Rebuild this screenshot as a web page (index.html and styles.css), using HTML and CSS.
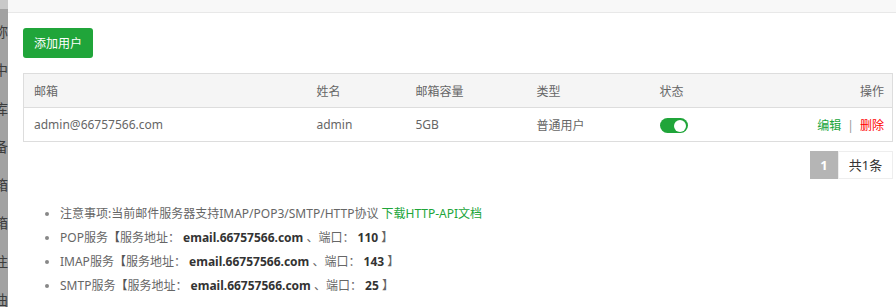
FILE: index.html
```html
<!DOCTYPE html>
<html lang="zh-CN">
<head>
<meta charset="utf-8">
<title>邮箱用户</title>
<link rel="stylesheet" href="styles.css">
</head>
<body>
<div class="page">
  <aside class="backdrop">
    <div class="backdrop-top"></div>
    <ul class="backdrop-list">
      <li>名称</li>
      <li>域中</li>
      <li>数据库</li>
      <li>备</li>
      <li>邮箱</li>
      <li>邮箱</li>
      <li>发送注</li>
      <li>邮曲</li>
    </ul>
  </aside>
  <section class="modal">
    <header class="modal-head"></header>
    <div class="modal-body">
      <button class="btn-add" type="button">添加用户</button>
      <table class="grid">
        <colgroup>
          <col class="c-mail"><col class="c-name"><col class="c-cap"><col class="c-type"><col class="c-state"><col>
        </colgroup>
        <thead>
          <tr><th>邮箱</th><th>姓名</th><th>邮箱容量</th><th>类型</th><th>状态</th><th class="right">操作</th></tr>
        </thead>
        <tbody>
          <tr>
            <td>admin@66757566.com</td>
            <td>admin</td>
            <td>5GB</td>
            <td>普通用户</td>
            <td><span class="toggle"><span class="knob"></span></span></td>
            <td class="right"><a class="edit">编辑</a><span class="sep">|</span><a class="del">删除</a></td>
          </tr>
        </tbody>
      </table>
      <div class="pager">
        <span class="page-cur">1</span><span class="page-total">共1条</span>
      </div>
      <ul class="notes">
        <li>注意事项:当前邮件服务器支持IMAP/POP3/SMTP/HTTP协议 <a class="link">下载HTTP-API文档</a></li>
        <li>POP服务<span class="br">【</span>服务地址： <b>email.66757566.com</b> 、端口： <b>110</b> 】</li>
        <li>IMAP服务<span class="br">【</span>服务地址： <b>email.66757566.com</b> 、端口： <b>143</b> 】</li>
        <li>SMTP服务<span class="br">【</span>服务地址： <b>email.66757566.com</b> 、端口： <b>25</b> 】</li>
      </ul>
    </div>
  </section>
</div>
</body>
</html>
```

FILE: styles.css
```css
* { box-sizing: border-box; }
html, body { margin: 0; padding: 0; }
body {
  width: 896px;
  height: 307px;
  overflow: hidden;
  background: #fff;
  font-family: "Noto Sans", "Noto Sans CJK SC", sans-serif;
  font-size: 12px;
  color: #666;
}
.page { display: flex; height: 307px; }
.backdrop {
  width: 8px;
  flex: none;
  background: #a2a2a2;
  overflow: hidden;
  display: flex;
  flex-direction: column;
}
.backdrop-top { height: 9px; background: #c9c9c9; flex: none; }
.backdrop-list {
  list-style: none;
  margin: 0;
  padding: 4px 0 0 0;
  width: 8px;
  direction: rtl;
  color: #3c3c3c;
  font-size: 14px;
  line-height: 38.3px;
  white-space: nowrap;
}
.backdrop-list li { text-align: right; }
.modal { flex: 1; display: flex; flex-direction: column; min-width: 0; }
.modal-head {
  height: 13px;
  background: #f8f8f8;
  border-bottom: 1px solid #e8e8e8;
}
.modal-body { padding: 15px 3px 0 15px; }
.btn-add {
  display: block;
  height: 30px;
  padding: 0 11px;
  border: 0;
  border-radius: 3px;
  background: #20a53a;
  color: #fff;
  font-family: inherit;
  font-size: 12px;
  cursor: pointer;
}
.grid {
  margin-top: 15px;
  width: 870px;
  border-collapse: collapse;
  table-layout: fixed;
  border: 1px solid #ddd;
}
.c-mail { width: 283px; }
.c-name { width: 99px; }
.c-cap { width: 121px; }
.c-type { width: 123px; }
.c-state { width: 100px; }
.grid th, .grid td {
  height: 34px;
  padding: 0 8px 0 10px;
  text-align: left;
  font-weight: normal;
  white-space: nowrap;
  color: #666;
}
.grid thead tr { background: #f5f5f5; }
.grid tbody tr { border-top: 1px solid #ddd; }
.grid .right { text-align: right; }
.toggle {
  display: inline-block;
  vertical-align: middle;
  width: 28px;
  height: 15px;
  border-radius: 8px;
  background: #20a53a;
  position: relative;
}
.knob {
  position: absolute;
  right: 2px;
  top: 1.5px;
  width: 12px;
  height: 12px;
  border-radius: 50%;
  background: #fff;
}
.edit { color: #20a53a; }
.del { color: #ff0000; }
.sep { color: #999; margin: 0 6px; }
.pager {
  display: flex;
  justify-content: flex-end;
  margin-top: 9px;
  width: 870px;
}
.page-cur {
  width: 28px;
  height: 28px;
  line-height: 28px;
  text-align: center;
  background: #b5b5b5;
  color: #fff;
  font-size: 13px;
  font-weight: bold;
}
.page-total {
  width: 55px;
  height: 28px;
  line-height: 26px;
  text-align: center;
  border: 1px solid #eee;
  color: #333;
  font-size: 13px;
}
.notes {
  margin: 23px 0 0 0;
  padding: 0 0 0 37px;
  line-height: 24px;
  color: #666;
}
.notes li { list-style: disc; }
.notes li::marker { color: #888; }
.notes b { color: #333; font-weight: bold; }
.br { font-weight: bold; color: #555; }
.link { color: #20a53a; }
```
